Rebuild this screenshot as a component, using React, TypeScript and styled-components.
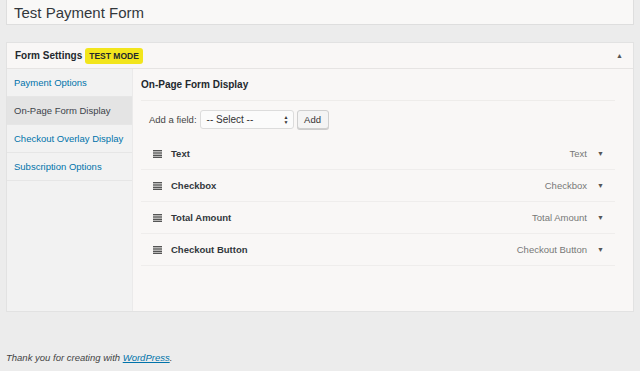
import styled, { createGlobalStyle } from 'styled-components';

const GlobalStyle = createGlobalStyle`
  html, body {
    margin: 0;
    padding: 0;
    background: #ececec;
    font-family: "Liberation Sans", Arial, sans-serif;
    color: #23282d;
  }
`;

const Page = styled.div`
  padding: 0 6px;
  height: 371px;
  box-sizing: border-box;
  overflow: hidden;
`;

const TitleBox = styled.div`
  height: 25px;
  background: #f9f8f7;
  border: 1px solid #dedede;
  border-top: none;
  box-sizing: border-box;
  padding-left: 7px;
  font-size: 15px;
  line-height: 26px;
  color: #32373c;
`;

const Panel = styled.div`
  margin-top: 17px;
  height: 270px;
  background: #f9f7f6;
  border: 1px solid #e2e2e2;
  box-sizing: border-box;
  display: flex;
  flex-direction: column;
`;

const PanelHeader = styled.div`
  height: 25px;
  flex: none;
  display: flex;
  align-items: center;
  padding: 0 8px;
  border-bottom: 1px solid #e6e4e3;
  font-size: 10px;
  font-weight: bold;
  gap: 3px;
`;

const Badge = styled.span`
  background: #f2e51c;
  color: #23282d;
  font-size: 8.5px;
  font-weight: bold;
  padding: 3px 4px;
  border-radius: 3px;
`;

const Toggle = styled.span`
  margin-left: auto;
  font-size: 7px;
  color: #555;
  margin-right: 2px;
`;

const Body = styled.div`
  flex: 1;
  display: flex;
`;

const Sidebar = styled.ul`
  width: 125px;
  flex: none;
  margin: 0;
  padding: 0;
  list-style: none;
  background: #f2f2f2;
  border-right: 1px solid #ebeaea;
`;

const NavItem = styled.li<{ $active?: boolean }>`
  height: 27px;
  display: flex;
  align-items: center;
  padding-left: 7px;
  font-size: 9.5px;
  border-bottom: 1px solid #e6e6e6;
  background: ${({ $active }) => ($active ? '#e4e4e4' : 'transparent')};
  color: ${({ $active }) => ($active ? '#3c434a' : '#0073aa')};
`;

const Main = styled.div`
  flex: 1;
  padding: 0 18px 0 8px;
`;

const Heading = styled.h3`
  margin: 0;
  height: 31px;
  display: flex;
  align-items: center;
  font-size: 10px;
  font-weight: bold;
  border-bottom: 1px solid #eeecea;
`;

const AddRow = styled.div`
  height: 37px;
  display: flex;
  align-items: center;
  padding-left: 8px;
  font-size: 9.5px;
  color: #444;
  gap: 3px;
`;

const Select = styled.div`
  width: 94px;
  height: 19px;
  box-sizing: border-box;
  border: 1px solid #dcdcdc;
  border-radius: 3px;
  background: #fbfbfb;
  display: flex;
  align-items: center;
  padding: 0 4px 0 6px;
  font-size: 10px;
  color: #333;
  justify-content: space-between;
`;

const Spinner = styled.span`
  display: flex;
  flex-direction: column;
  font-size: 5px;
  line-height: 5px;
  color: #333;
`;

const AddButton = styled.div`
  height: 19px;
  width: 32px;
  box-sizing: border-box;
  border: 1px solid #cfcfcf;
  border-radius: 3px;
  background: #f4f4f4;
  box-shadow: 0 1px 0 #ccc;
  display: flex;
  align-items: center;
  justify-content: center;
  font-size: 9.5px;
  color: #333;
`;

const FieldRow = styled.div`
  height: 31px;
  display: flex;
  align-items: center;
  padding-left: 12px;
  border-bottom: 1px solid #efedec;
  font-size: 9.5px;
`;

const FieldName = styled.span`
  font-weight: bold;
  margin-left: 9px;
  flex: 1;
  color: #32373c;
`;

const FieldType = styled.span`
  color: #777;
`;

const Caret = styled.span`
  font-size: 7px;
  color: #555;
  margin-left: 10px;
  margin-right: 10px;
  width: 8px;
`;

const Footer = styled.p`
  margin: 40px 0 0;
  font-size: 9.5px;
  font-style: italic;
  color: #444;

  a {
    color: #0073aa;
  }
`;

function DragIcon() {
  return (
    <svg width="9" height="8" viewBox="0 0 9 8">
      <rect x="0" y="0" width="9" height="1.4" fill="#555" />
      <rect x="0" y="2.3" width="9" height="1.4" fill="#555" />
      <rect x="0" y="4.6" width="9" height="1.4" fill="#555" />
      <rect x="0" y="6.6" width="9" height="1.4" fill="#555" />
    </svg>
  );
}

const navItems = ['Payment Options', 'On-Page Form Display', 'Checkout Overlay Display', 'Subscription Options'];
const fields = ['Text', 'Checkbox', 'Total Amount', 'Checkout Button'];

export default function App() {
  return (
    <Page>
      <GlobalStyle />
      <TitleBox>Test Payment Form</TitleBox>
      <Panel>
        <PanelHeader>
          Form Settings <Badge>TEST MODE</Badge>
          <Toggle>▲</Toggle>
        </PanelHeader>
        <Body>
          <Sidebar>
            {navItems.map((n, i) => (
              <NavItem key={n} $active={i === 1}>{n}</NavItem>
            ))}
          </Sidebar>
          <Main>
            <Heading>On-Page Form Display</Heading>
            <AddRow>
              Add a field:
              <Select>
                -- Select --
                <Spinner><span>▲</span><span>▼</span></Spinner>
              </Select>
              <AddButton>Add</AddButton>
            </AddRow>
            {fields.map(f => (
              <FieldRow key={f}>
                <DragIcon />
                <FieldName>{f}</FieldName>
                <FieldType>{f}</FieldType>
                <Caret>▼</Caret>
              </FieldRow>
            ))}
          </Main>
        </Body>
      </Panel>
      <Footer>
        Thank you for creating with <a href="#">WordPress</a>.
      </Footer>
    </Page>
  );
}
